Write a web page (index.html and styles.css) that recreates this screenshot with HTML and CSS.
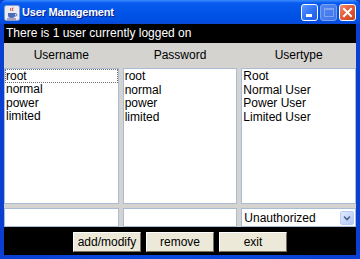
FILE: index.html
```html
<!DOCTYPE html>
<html>
<head>
<meta charset="utf-8">
<title>User Management</title>
<link rel="stylesheet" href="styles.css">
</head>
<body>
<div class="window">
  <div class="titlebar">
    <svg class="app-icon" width="16" height="16" viewBox="0 0 16 16">
      <rect x="0.5" y="0.5" width="15" height="15" rx="2" fill="#e9ecf4" stroke="#8a9cc4"/>
      <path d="M7 3 q-1 1.5 0 3 M9 2.5 q-1 1.5 0 3.5" fill="none" stroke="#d0402a" stroke-width="1"/>
      <path d="M4 8 h7 v2.5 q0 2.5 -3.5 2.5 q-3.5 0 -3.5 -2.5 z" fill="#4a6cb8"/>
      <path d="M11 8.5 q2 0 2 1.3 q0 1.3 -2 1.3" fill="none" stroke="#4a6cb8" stroke-width="1"/>
      <rect x="3" y="13.5" width="9" height="1" fill="#6a5a8a"/>
    </svg>
    <span class="title">User Management</span>
    <div class="controls">
      <div class="ctl ctl-min"><span class="min-bar"></span></div>
      <div class="ctl ctl-max"><span class="max-box"></span></div>
      <div class="ctl ctl-close">
        <svg width="11" height="11" viewBox="0 0 11 11"><path d="M2 2 L9 9 M9 2 L2 9" stroke="#fff" stroke-width="2" stroke-linecap="square"/></svg>
      </div>
    </div>
  </div>
  <div class="content">
    <div class="status">There is 1 user currently logged on</div>
    <div class="columns">
      <div class="head">Username</div>
      <div class="head">Password</div>
      <div class="head">Usertype</div>
      <div class="list">
        <div class="item focused">root</div>
        <div class="item">normal</div>
        <div class="item">power</div>
        <div class="item">limited</div>
      </div>
      <div class="list">
        <div class="item">root</div>
        <div class="item">normal</div>
        <div class="item">power</div>
        <div class="item">limited</div>
      </div>
      <div class="list">
        <div class="item">Root</div>
        <div class="item">Normal User</div>
        <div class="item">Power User</div>
        <div class="item">Limited User</div>
      </div>
      <div class="field"></div>
      <div class="field"></div>
      <div class="field combo">
        <span class="combo-text">Unauthorized</span>
        <span class="combo-btn">
          <svg width="8" height="6" viewBox="0 0 8 6"><path d="M1 1.5 L4 4.5 L7 1.5" fill="none" stroke="#4d6185" stroke-width="1.6"/></svg>
        </span>
      </div>
    </div>
    <div class="buttons">
      <div class="btn">add/modify</div>
      <div class="btn">remove</div>
      <div class="btn">exit</div>
    </div>
  </div>
</div>
</body>
</html>
```

FILE: styles.css
```css
html, body {
  margin: 0;
  padding: 0;
}
body {
  width: 360px;
  height: 259px;
  overflow: hidden;
  font-family: "Liberation Sans", Arial, sans-serif;
  font-size: 12px;
}
.window {
  width: 360px;
  height: 259px;
  display: flex;
  flex-direction: column;
  background: linear-gradient(90deg, #0a3fd2, #0b4be0 50%, #0a3fd2);
  box-sizing: border-box;
}
.titlebar {
  height: 24px;
  flex: none;
  display: flex;
  align-items: center;
  padding: 0 4px 0 4px;
  background: linear-gradient(180deg, #3b8cff 0%, #0a5cf0 12%, #0054e6 50%, #0050e3 85%, #0a48d4 100%);
  border-radius: 6px 6px 0 0;
}
.app-icon {
  flex: none;
  margin-top: 1px;
}
.title {
  margin-left: 2px;
  color: #fff;
  font-weight: bold;
  font-size: 11px;
  letter-spacing: -0.2px;
  text-shadow: 1px 1px 0 #0a1e8c;
}
.controls {
  margin-left: auto;
  display: flex;
  gap: 2px;
  margin-top: 1px;
}
.ctl {
  width: 15px;
  height: 15px;
  border: 1px solid #fff;
  border-radius: 3px;
  position: relative;
  display: flex;
  align-items: center;
  justify-content: center;
}
.ctl-min {
  background: linear-gradient(135deg, #5c97ff, #2a6df5 60%, #1f5ee8);
}
.min-bar {
  position: absolute;
  left: 4px;
  bottom: 3px;
  width: 6px;
  height: 3px;
  background: #fff;
}
.ctl-max {
  background: linear-gradient(135deg, #5187f2, #3e74e8);
  border-color: #7ea2f0;
}
.max-box {
  width: 8px;
  height: 6px;
  border: 1px solid #7ea2f0;
  border-top-width: 2px;
}
.ctl-close {
  background: linear-gradient(135deg, #f08a6a, #e05a36 50%, #c8401e);
}
.content {
  flex: 1;
  margin: 0 4px 4px 4px;
  display: flex;
  flex-direction: column;
  background: #d4d3d0;
}
.status {
  height: 19px;
  line-height: 19px;
  background: #000;
  color: #fff;
  padding-left: 2px;
  flex: none;
}
.columns {
  display: grid;
  grid-template-columns: 1fr 1fr 1fr;
  grid-template-rows: 25px 136px 23px;
  column-gap: 4px;
  flex: none;
}
.head {
  text-align: center;
  line-height: 25px;
  color: #000;
}
.list {
  background: #fff;
  border: 1px solid #a9bcd6;
  padding-top: 1px;
}
.item {
  height: 13.6px;
  line-height: 13.6px;
  padding-left: 1px;
  color: #000;
  white-space: nowrap;
}
.item.focused {
  outline: 1px dotted #707070;
  outline-offset: -1px;
  margin-top: -1px;
  height: 14px;
  line-height: 15px;
}
.field {
  align-self: end;
  height: 19px;
  box-sizing: border-box;
  background: #fff;
  border: 1px solid #a9bcd6;
}
.combo {
  display: flex;
  align-items: center;
  padding-left: 2px;
  padding-right: 1px;
}
.combo-text {
  flex: 1;
  color: #000;
}
.combo-btn {
  width: 14px;
  height: 14px;
  box-sizing: border-box;
  border: 1px solid #b8ccf2;
  border-radius: 2px;
  background: linear-gradient(135deg, #e2ebfe, #c4d6fb 60%, #b3c8f6);
  display: flex;
  align-items: center;
  justify-content: center;
}
.buttons {
  flex: 1;
  background: #000;
  display: flex;
  justify-content: center;
  align-items: flex-start;
  gap: 5px;
  padding-top: 5px;
}
.btn {
  width: 68px;
  height: 20px;
  box-sizing: border-box;
  background: #ece9d8;
  border: 1px solid;
  border-color: #fff #716f64 #716f64 #fff;
  text-align: center;
  line-height: 18px;
  color: #000;
}
```
